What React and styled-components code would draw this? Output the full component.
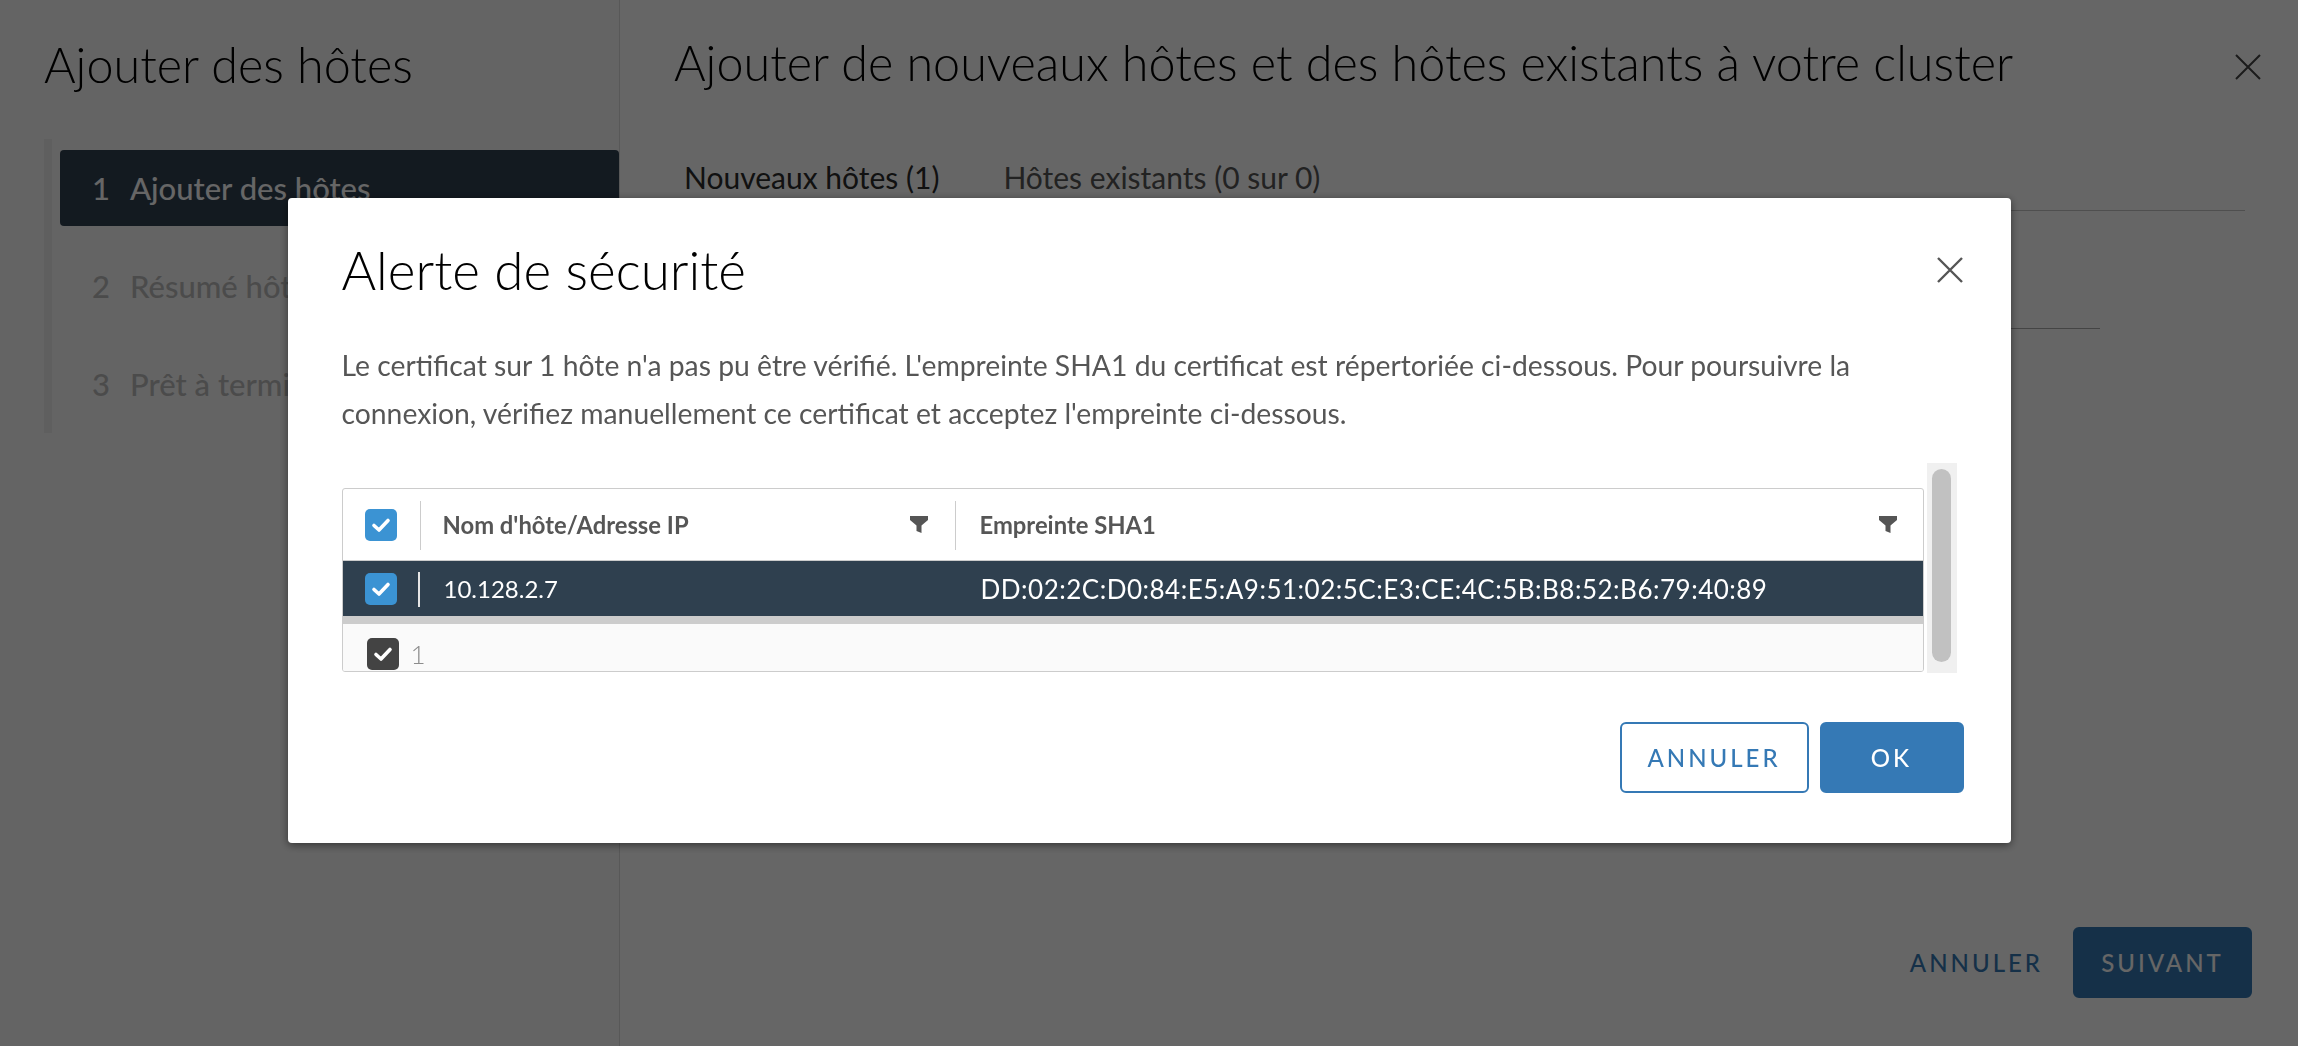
import React from 'react';
import styled, { createGlobalStyle } from 'styled-components';

const GlobalStyle = createGlobalStyle`
  * { box-sizing: border-box; }
  html, body { margin: 0; padding: 0; width: 100%; height: 100%; }
  body {
    font-family: Lato, "Noto Sans", "Liberation Sans", sans-serif;
    background: #fff;
    overflow: hidden;
  }
  #root { height: 100%; }
`;

const Page = styled.div`
  display: flex;
  width: 100vw;
  height: 100vh;
  background: #fff;
`;

const Sidebar = styled.aside`
  flex: none;
  width: 620px;
  background: #fafafa;
  border-right: 1px solid #dcdcdc;
  padding-top: 36px;
`;

const SidebarTitle = styled.h2`
  margin: 0 0 0 44px;
  font-size: 48.5px;
  line-height: 56px;
  font-weight: 300;
  color: #000;
`;

const StepNav = styled.ol`
  list-style: none;
  margin: 47px 0 0 44px;
  padding: 11px 0 11px 8px;
  border-left: 8px solid #eeeeee;
  display: flex;
  flex-direction: column;
  gap: 22px;
`;

const Step = styled.li`
  display: flex;
  align-items: center;
  height: 76px;
  padding-left: 32px;
  border-radius: 4px;
  font-size: 31px;
  line-height: 40px;
  font-weight: 500;
  white-space: nowrap;
  background: ${p => (p.$active ? '#304152' : 'transparent')};
  color: ${p => (p.$active ? '#ffffff' : '#bcbcbc')};
`;

const StepNum = styled.span`
  width: 38px;
`;

const Main = styled.main`
  flex: 1;
  display: flex;
  flex-direction: column;
  padding: 34px 46px 48px 54px;
`;

const MainHeader = styled.div`
  display: flex;
  align-items: center;
  justify-content: space-between;
`;

const MainTitle = styled.h1`
  margin: 0;
  font-size: 48.5px;
  line-height: 56px;
  font-weight: 300;
  color: #000;
`;

const CloseButton = styled.button`
  border: none;
  background: none;
  padding: 0;
  width: 28px;
  height: 28px;
  display: flex;
  align-items: center;
  justify-content: center;
  margin-top: ${p => p.$offset || 0}px;
  margin-right: ${p => p.$shift || 0}px;
`;

const Tabs = styled.div`
  display: flex;
  gap: 44px;
  margin: 54px 7px 0 0;
  border-bottom: 1px solid #c6c6c6;
`;

const Tab = styled.div`
  height: 66px;
  display: flex;
  align-items: center;
  padding: 0 10px;
  font-size: 30px;
  color: ${p => (p.$active ? '#2b2b2b' : '#565656')};
`;

const FieldRow = styled.div`
  display: grid;
  grid-template-columns: 700px 726px;
  margin-top: 68px;
`;

const FieldLabel = styled.label`
  font-size: 28px;
  color: #565656;
  align-self: center;
`;

const FieldInput = styled.div`
  height: 50px;
  border-bottom: 1px solid #aaaaaa;
`;

const PageFooter = styled.div`
  margin-top: auto;
  display: flex;
  justify-content: flex-end;
  align-items: center;
  gap: 15px;
`;

const FlatButton = styled.button`
  border: none;
  background: none;
  padding: 0 15px;
  height: 71px;
  font-family: inherit;
  font-size: 24px;
  font-weight: 500;
  letter-spacing: 3px;
  color: #3579b5;
`;

const SolidButton = styled.button`
  height: 71px;
  width: ${p => p.$w}px;
  border-radius: 6px;
  border: 2px solid #3579b5;
  background: ${p => (p.$outline ? '#fff' : '#3579b5')};
  color: ${p => (p.$outline ? '#3579b5' : '#fff')};
  font-family: inherit;
  font-size: 24px;
  font-weight: 500;
  letter-spacing: 3px;
  padding: 0;
`;

const Backdrop = styled.div`
  position: fixed;
  inset: 0;
  background: rgba(0, 0, 0, 0.6);
  display: flex;
  align-items: center;
  justify-content: center;
`;

const Dialog = styled.div`
  width: 1723px;
  margin-bottom: 5px;
  background: #fff;
  border-radius: 4px;
  box-shadow: 0 2px 8px rgba(0, 0, 0, 0.5);
  padding: 44px 47px 50px 54px;
`;

const DialogHeader = styled.div`
  display: flex;
  align-items: center;
  justify-content: space-between;
`;

const DialogTitle = styled.h3`
  margin: 0;
  font-size: 53px;
  line-height: 56px;
  font-weight: 300;
  color: #000;
`;

const Message = styled.p`
  margin: 43px 0 0;
  font-size: 28.3px;
  line-height: 48px;
  color: #565656;
`;

const GridArea = styled.div`
  display: flex;
  align-items: flex-start;
  margin-top: 26px;
`;

const Table = styled.div`
  flex: 1;
  margin-top: 25px;
  border: 1px solid #cccccc;
  border-radius: 3px;
  overflow: hidden;
`;

const HeaderRow = styled.div`
  display: grid;
  grid-template-columns: 77px 535px 1fr;
  height: 72px;
  border-bottom: 1px solid #cccccc;
`;

const BodyRow = styled.div`
  display: grid;
  grid-template-columns: 77px 535px 1fr;
  height: 55px;
  background: #2f404f;
  color: #fff;
  border-bottom: 8px solid #cccccc;
  box-sizing: content-box;
`;

const SelectCell = styled.div`
  display: flex;
  align-items: center;
  justify-content: center;
`;

const HeadCell = styled.div`
  position: relative;
  display: flex;
  align-items: center;
  justify-content: space-between;
  padding: 0 ${p => p.$pr}px 0 ${p => p.$pl}px;
  font-size: 23.8px;
  font-weight: 700;
  color: #565656;
  &::before {
    content: '';
    position: absolute;
    left: 0;
    top: 12px;
    bottom: 10px;
    width: 1px;
    background: #cccccc;
  }
`;

const DataCell = styled.div`
  position: relative;
  display: flex;
  align-items: center;
  padding-left: ${p => p.$pl}px;
  font-size: ${p => (p.$mono ? 26 : 24)}px;
  letter-spacing: ${p => (p.$mono ? 0.5 : 0)}px;
  &::before {
    content: '';
    display: ${p => (p.$sep ? 'block' : 'none')};
    position: absolute;
    left: -2px;
    top: 11px;
    bottom: 9px;
    width: 2px;
    background: #e6e6e6;
  }
`;

const TableFooter = styled.div`
  height: 47px;
  overflow: hidden;
  background: #fafafa;
  display: flex;
  align-items: flex-start;
  gap: 12px;
  padding: 14px 0 0 24px;
`;

const FooterCount = styled.span`
  font-size: 26px;
  line-height: 32px;
  font-weight: 300;
  color: #8c8c8c;
`;

const Box = styled.span`
  flex: none;
  width: 32px;
  height: 32px;
  border-radius: 5px;
  background: ${p => (p.$dark ? '#434343' : '#3b93d3')};
  display: inline-flex;
  align-items: center;
  justify-content: center;
`;

const ScrollTrack = styled.div`
  flex: none;
  width: 30px;
  height: 210px;
  margin: 0 7px 0 3px;
  background: #f0f0f0;
  padding-top: 6px;
`;

const ScrollThumb = styled.div`
  width: 19px;
  height: 193px;
  margin: 0 auto;
  border-radius: 10px;
  background: #c1c1c1;
`;

const DialogFooter = styled.div`
  display: flex;
  justify-content: flex-end;
  gap: 11px;
  margin-top: 49px;
`;

const Check = ({ dark }) => (
  <Box $dark={dark}>
    <svg width="20" height="16" viewBox="0 0 20 16" fill="none">
      <path d="M3 8.5 L8 13 L17 3.5" stroke="#fff" strokeWidth="3.6" strokeLinecap="round" strokeLinejoin="round" />
    </svg>
  </Box>
);

const FilterIcon = () => (
  <svg width="18" height="17" viewBox="0 0 18 17">
    <path d="M0 0H18V4L11.5 9.5V17L6.5 15V9.5L0 4Z" fill="#555" />
  </svg>
);

const XIcon = ({ size = 26, color = '#555', w = 2.4 }) => (
  <svg width={size} height={size} viewBox="0 0 26 26">
    <path d="M1 1 L25 25 M25 1 L1 25" stroke={color} strokeWidth={w} />
  </svg>
);

export default function App() {
  return (
    <>
      <GlobalStyle />
      <Page>
        <Sidebar>
          <SidebarTitle>Ajouter des hôtes</SidebarTitle>
          <StepNav>
            <Step $active><StepNum>1</StepNum>Ajouter des hôtes</Step>
            <Step><StepNum>2</StepNum>Résumé hôtes</Step>
            <Step><StepNum>3</StepNum>Prêt à terminer</Step>
          </StepNav>
        </Sidebar>
        <Main>
          <MainHeader>
            <MainTitle>Ajouter de nouveaux hôtes et des hôtes existants à votre cluster</MainTitle>
            <CloseButton $offset={10} $shift={-10} aria-label="Fermer">
              <XIcon size={26} color="#444" w={2} />
            </CloseButton>
          </MainHeader>
          <Tabs>
            <Tab $active>Nouveaux hôtes (1)</Tab>
            <Tab>Hôtes existants (0 sur 0)</Tab>
          </Tabs>
          <FieldRow>
            <FieldLabel>Nom d'hôte ou adresse IP</FieldLabel>
            <FieldInput />
          </FieldRow>
          <PageFooter>
            <FlatButton>ANNULER</FlatButton>
            <SolidButton $w={179}>SUIVANT</SolidButton>
          </PageFooter>
        </Main>
      </Page>
      <Backdrop>
        <Dialog role="dialog">
          <DialogHeader>
            <DialogTitle>Alerte de sécurité</DialogTitle>
            <CloseButton aria-label="Fermer">
              <XIcon size={26} color="#555" w={2.4} />
            </CloseButton>
          </DialogHeader>
          <Message>
            Le certificat sur 1 hôte n'a pas pu être vérifié. L'empreinte SHA1 du certificat est répertoriée ci-dessous. Pour poursuivre la connexion, vérifiez manuellement ce certificat et acceptez l'empreinte ci-dessous.
          </Message>
          <GridArea>
            <Table>
              <HeaderRow>
                <SelectCell><Check /></SelectCell>
                <HeadCell $pl={23} $pr={27}>Nom d'hôte/Adresse IP<FilterIcon /></HeadCell>
                <HeadCell $pl={25} $pr={26}>Empreinte SHA1<FilterIcon /></HeadCell>
              </HeaderRow>
              <BodyRow>
                <SelectCell><Check /></SelectCell>
                <DataCell $pl={24} $sep>10.128.2.7</DataCell>
                <DataCell $pl={26} $mono>DD:02:2C:D0:84:E5:A9:51:02:5C:E3:CE:4C:5B:B8:52:B6:79:40:89</DataCell>
              </BodyRow>
              <TableFooter>
                <Check dark />
                <FooterCount>1</FooterCount>
              </TableFooter>
            </Table>
            <ScrollTrack><ScrollThumb /></ScrollTrack>
          </GridArea>
          <DialogFooter>
            <SolidButton $outline $w={189}>ANNULER</SolidButton>
            <SolidButton $w={144}>OK</SolidButton>
          </DialogFooter>
        </Dialog>
      </Backdrop>
    </>
  );
}
